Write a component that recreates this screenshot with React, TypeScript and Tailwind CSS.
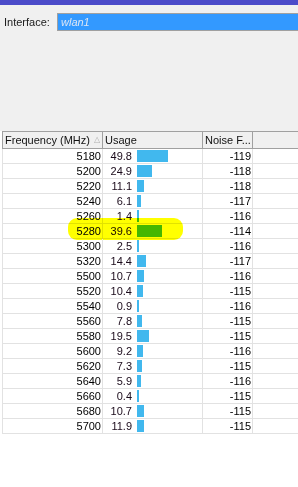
const rows: [number, number, number][] = [
  [5180, 49.8, -119],
  [5200, 24.9, -118],
  [5220, 11.1, -118],
  [5240, 6.1, -117],
  [5260, 1.4, -116],
  [5280, 39.6, -114],
  [5300, 2.5, -116],
  [5320, 14.4, -117],
  [5500, 10.7, -116],
  [5520, 10.4, -115],
  [5540, 0.9, -116],
  [5560, 7.8, -115],
  [5580, 19.5, -115],
  [5600, 9.2, -116],
  [5620, 7.3, -115],
  [5640, 5.9, -116],
  [5660, 0.4, -115],
  [5680, 10.7, -115],
  [5700, 11.9, -115],
];

const font = {fontFamily: '"Liberation Sans", Arial, sans-serif'};

export default function App() {
  return (
    <div className="h-[487px] w-[298px] overflow-hidden bg-white text-[11px] leading-none text-black" style={font}>
      <div className="h-[5px] bg-[#4b4bc9]" />
      <div className="h-[126px] bg-[#f0f0f0] pt-[8px]">
        <div className="flex items-center">
          <span className="w-[57px] pl-[4px] text-[#1a1a1a]">Interface:</span>
          <div className="flex h-[18px] flex-1 items-center border border-r-0 border-[#a0a0a0] bg-[#3399ff] pl-[3px]">
            <span className="italic text-[#dde6f5]">wlan1</span>
          </div>
        </div>
      </div>

      <div className="ml-[2px]">
        <div className="grid h-[18px] grid-cols-[100px_100px_50px_1fr] border border-r-0 border-[#a0a0a0] bg-[#f0f0f0] text-[#111]">
          <div className="flex items-center border-r border-[#a0a0a0] pl-[2px]">
            Frequency (MHz)
            <span className="ml-[4px] text-[8px] text-[#b0b0b0]">△</span>
          </div>
          <div className="flex items-center border-r border-[#a0a0a0] pl-[2px]">Usage</div>
          <div className="flex items-center border-r border-[#a0a0a0] pl-[2px]">Noise F...</div>
          <div />
        </div>

        {rows.map(([freq, usage, noise]) => (
          <div key={freq} className="relative grid h-[15px] grid-cols-[100px_100px_50px_1fr] border-b border-l border-[#e2e2e2]">
            {freq === 5280 && (
              <div className="pointer-events-none absolute left-[65px] top-[-6px] h-[22px] w-[115px] rounded-[9px] bg-[#ffff00] mix-blend-multiply" />
            )}
            <div className="flex items-center justify-end border-r border-[#e2e2e2] pr-[1px]">{freq}</div>
            <div className="flex items-center border-r border-[#e2e2e2]">
              <span className="w-[29px] text-right text-[#1a0a1a]">{usage.toFixed(1)}</span>
              <div
                className={`ml-[5px] h-[12px] ${freq === 5280 ? "bg-[#44b700]" : "bg-[#41b8ee]"}`}
                style={{width: Math.max(2, Math.round(usage * 0.62))}}
              />
            </div>
            <div className="flex items-center justify-end border-r border-[#e2e2e2] pr-[1px]">{noise}</div>
            <div />
          </div>
        ))}
      </div>
    </div>
  );
}
